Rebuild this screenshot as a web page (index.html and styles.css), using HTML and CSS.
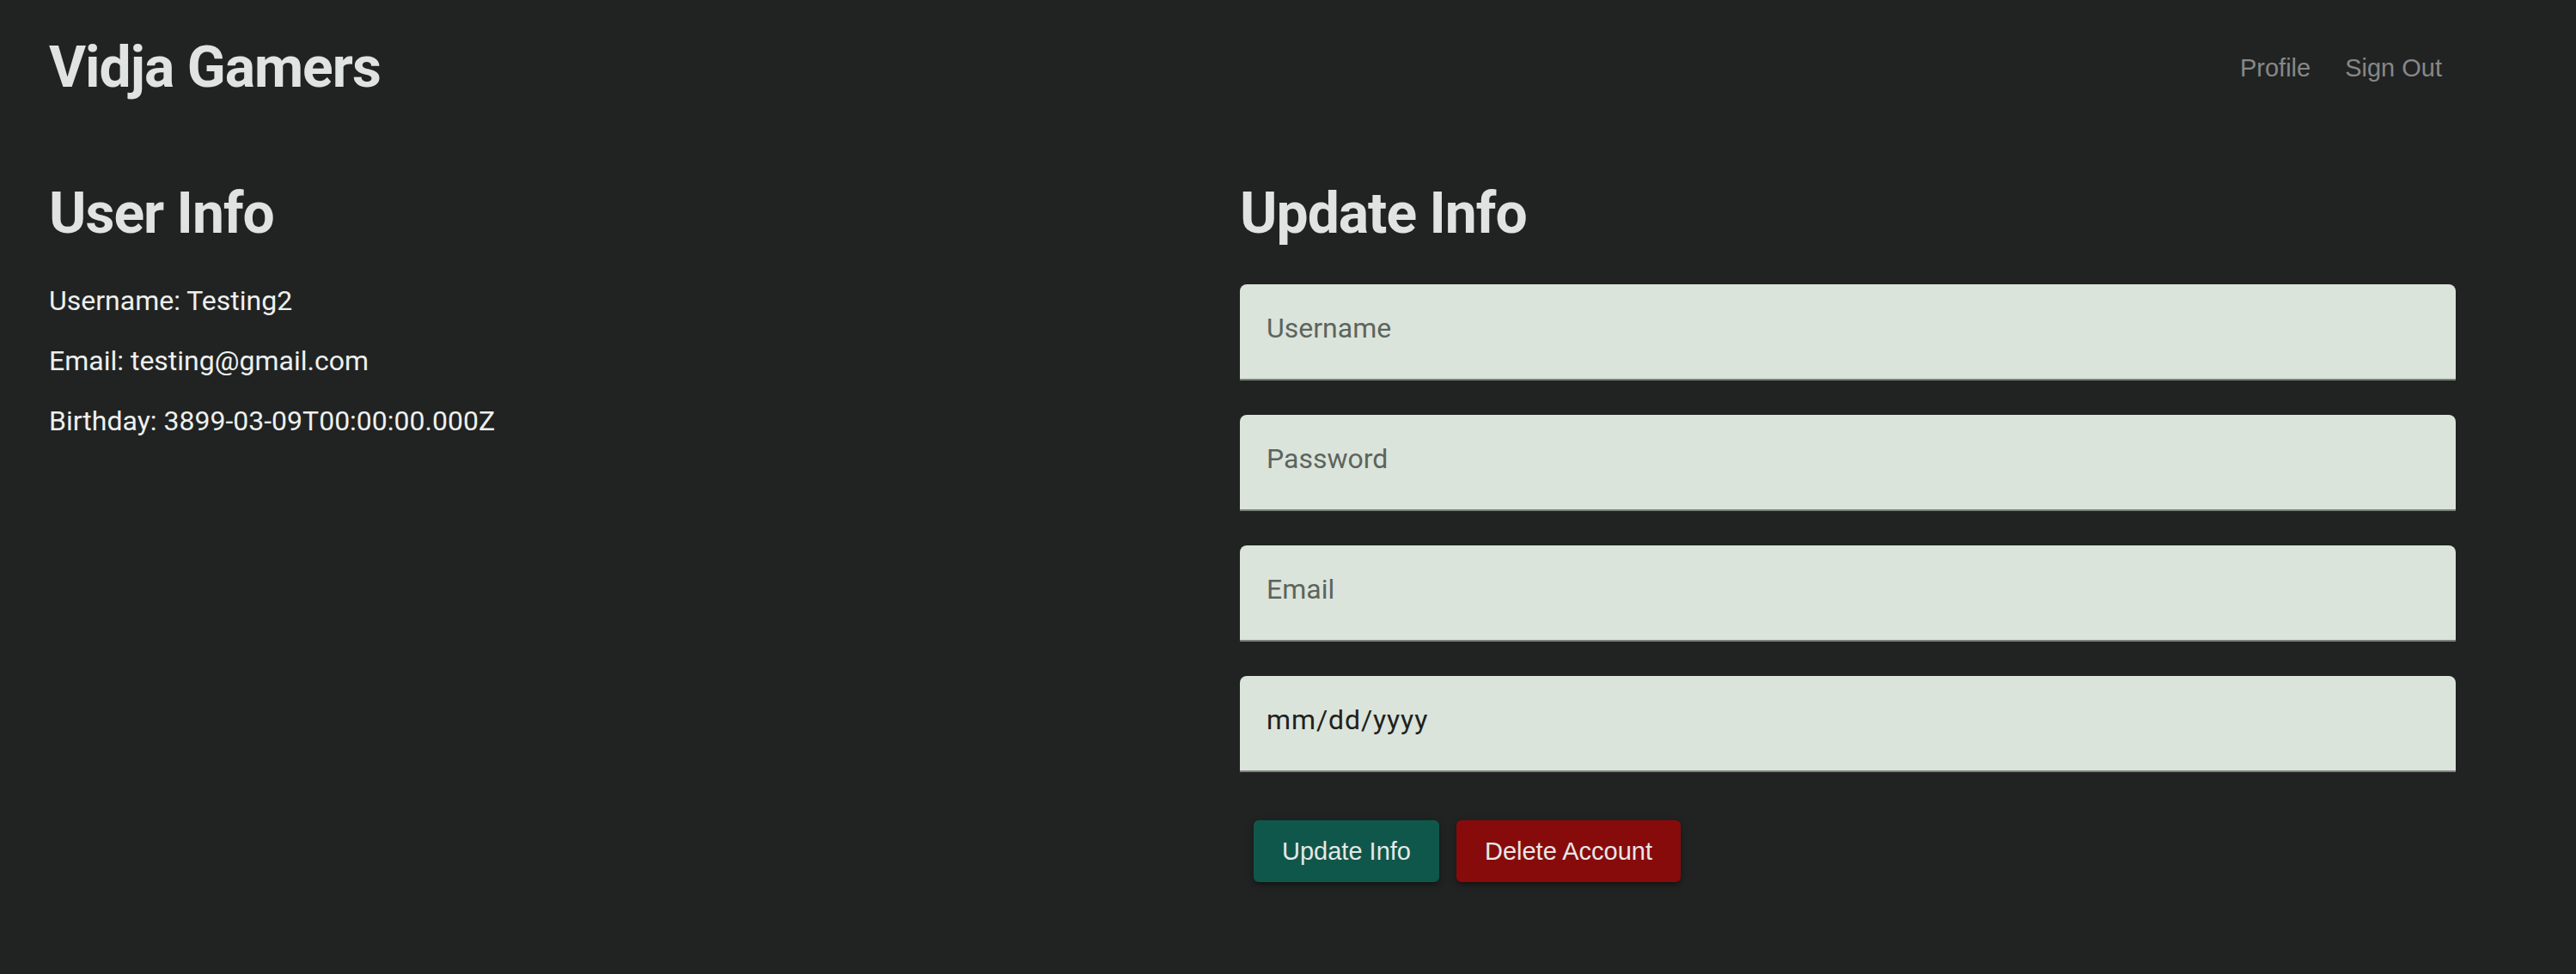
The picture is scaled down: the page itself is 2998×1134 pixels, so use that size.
FILE: index.html
```html
<!DOCTYPE html>
<html lang="en">
<head>
<meta charset="utf-8">
<title>Vidja Gamers - Profile</title>
<link rel="stylesheet" href="styles.css">
</head>
<body>
<div class="page">
  <header class="topbar">
    <div class="brand">Vidja Gamers</div>
    <nav class="nav">
      <a class="nav-link" href="#">Profile</a>
      <a class="nav-link" href="#">Sign Out</a>
    </nav>
  </header>
  <main class="columns">
    <section class="col">
      <h2 class="heading">User Info</h2>
      <p class="info">Username: Testing2</p>
      <p class="info">Email: testing@gmail.com</p>
      <p class="info">Birthday: 3899-03-09T00:00:00.000Z</p>
    </section>
    <section class="col">
      <h2 class="heading">Update Info</h2>
      <form class="form">
        <div class="fields">
          <input class="field" type="text" placeholder="Username">
          <input class="field" type="password" placeholder="Password">
          <input class="field" type="email" placeholder="Email">
          <input class="field field-date" type="text" placeholder="mm/dd/yyyy">
        </div>
        <div class="actions">
          <button class="btn btn-update" type="button">Update Info</button>
          <button class="btn btn-delete" type="button">Delete Account</button>
        </div>
      </form>
    </section>
  </main>
</div>
</body>
</html>
```
FILE: styles.css
```css
html, body {
  margin: 0;
  padding: 0;
}
body {
  background: #212322;
  font-family: Roboto, "Noto Sans", sans-serif;
  color: #eceeed;
  height: 1134px;
  overflow: hidden;
}
.page {
  padding: 39px 136px 0 57px;
}
.topbar {
  display: flex;
  justify-content: space-between;
  align-items: center;
  height: 80px;
}
.brand {
  font-family: Roboto, sans-serif;
  font-weight: 700;
  font-size: 66px;
  line-height: 80px;
  letter-spacing: -1px;
  color: #dfe3e2;
}
.nav {
  display: flex;
}
.nav-link {
  font-family: "Liberation Sans", Arial, sans-serif;
  font-size: 29px;
  line-height: 80px;
  color: #878888;
  text-decoration: none;
  padding: 0 20px;
}
.columns {
  display: grid;
  grid-template-columns: 1386px 1415px;
  margin-top: 90px;
}
.heading {
  font-family: Roboto, sans-serif;
  font-weight: 700;
  font-size: 66px;
  line-height: 80px;
  letter-spacing: -1px;
  margin: 0 0 42px;
  color: #dfe3e2;
}
.info {
  font-size: 32px;
  line-height: 38px;
  margin: 0 0 32px;
  color: #eef0ef;
}
.form {
  margin: 0;
}
.fields {
  display: flex;
  flex-direction: column;
  gap: 40px;
}
.field {
  box-sizing: border-box;
  width: 1415px;
  height: 112px;
  margin: 0;
  padding: 0 31px 8px;
  border: none;
  border-bottom: 2px solid #7b817c;
  border-radius: 8px 8px 0 0;
  background: #dae4da;
  font-family: Roboto, sans-serif;
  font-size: 32px;
  color: #222;
  outline: none;
}
.field::placeholder {
  color: #5d645f;
  opacity: 1;
}
.field-date::placeholder {
  color: #1f2120;
  letter-spacing: 0.9px;
}
.actions {
  display: flex;
  gap: 20px;
  margin-top: 56px;
  padding-left: 16px;
}
.btn {
  height: 72px;
  padding: 0 33px;
  border: none;
  border-radius: 6px;
  font-family: "Liberation Sans", Arial, sans-serif;
  font-size: 29px;
  color: #e6e8e7;
  cursor: pointer;
  box-shadow: 0 4px 4px 0 rgba(0,0,0,0.14), 0 6px 2px -4px rgba(0,0,0,0.12), 0 2px 10px 0 rgba(0,0,0,0.2);
}
.btn-update {
  background: #0f574a;
}
.btn-delete {
  background: #880b0b;
}
```
